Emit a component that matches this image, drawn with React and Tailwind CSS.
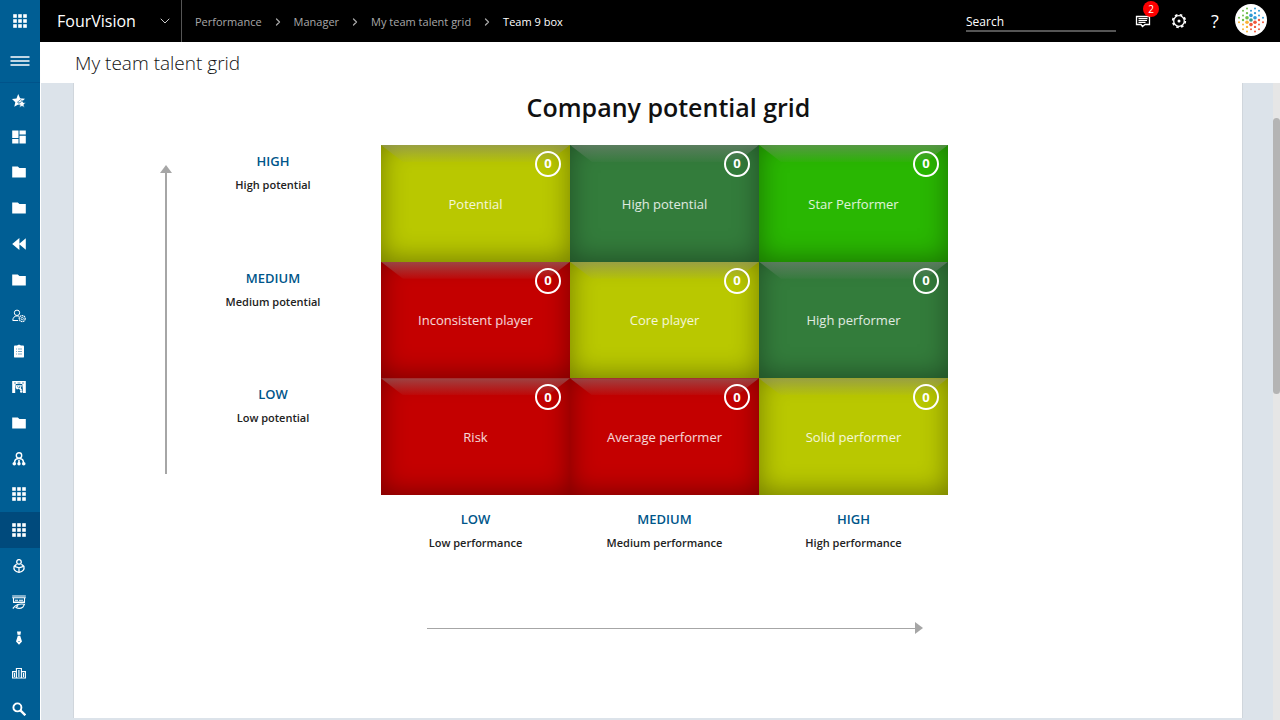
import React, { useState } from 'react';
import { ChevronDown, ChevronRight } from 'lucide-react';
import clsx from 'clsx';

const Icon = ({ children, size = 14, box = 14 }) => (
    <svg width={size} height={size} viewBox={`0 0 ${box} ${box}`} fill="currentColor" aria-hidden="true">
        {children}
    </svg>
);

const GridIcon = () => (
    <Icon>
        {[0, 5, 10].map((y) => [0, 5, 10].map((x) => <rect key={`${x}-${y}`} x={x + 0.2} y={y + 0.2} width="3.6" height="3.6" />))}
    </Icon>
);

const FolderIcon = () => (
    <Icon><path d="M.2 1.600h5.600l1.600 1.400h6.400v9.600H.2z" /></Icon>
);

const StarIcon = () => (
    <Icon>
        <path d="M6.200 0l1.900 4.300 4.900.5-3.500 3.200 1 4.400-4.300-1.800-3.900 2.200 1-4.600L0 5.100l4.500-.7z" />
        <path d="M10 6.200l1.100 2.200 2.600.4-1.900 1.800.5 2.800-2.300-1.300-2.400 1.300.5-2.800-1.900-1.800 2.600-.4z" stroke="#005e94" strokeWidth="0.600" />
        <path d="M5 8.600l4.400-3.600" stroke="#005e94" strokeWidth="0.600" />
    </Icon>
);

const DashboardIcon = () => (
    <Icon><path d="M.2.6h6.3v7.3H.2zM7.5.6h6.3v4H7.5zM.2 9h6.3v4.400H.2zM7.500 5.800h6.300v7.600H7.500z" /></Icon>
);

const RewindIcon = () => (
    <Icon><path d="M7.400 1v12L.2 7zM13.800 1.200v11.600L7 7z" /></Icon>
);

const PersonGearIcon = () => (
    <Icon>
        <g fill="none" stroke="currentColor">
            <circle cx="5" cy="3.800" r="2.700" strokeWidth="1" />
            <path d="M6.200 11.500H.8C.8 8.800 2.400 6.900 5 6.900c.8 0 1.500.2 2 .5" strokeWidth="1" />
            <circle cx="10.200" cy="9.600" r="3" strokeWidth="1.200" strokeDasharray="1.700 .5" />
            <circle cx="10.200" cy="9.600" r="1.200" strokeWidth=".8" />
        </g>
    </Icon>
);

const ClipboardIcon = () => (
    <Icon>
        <path d="M3.200 1.600h2C5.400.3 8.600.3 8.800 1.600h2c.8 0 1.200.4 1.200 1.200v9.600c0 .8-.4 1.200-1.200 1.200H3.200c-.8 0-1.200-.4-1.200-1.200V2.800c0-.8.4-1.200 1.200-1.200z" />
        <path d="M4 5h1M6 5h4M4 7.500h1M6 7.500h4M4 10h1M6 10h4" stroke="#3f86b0" strokeWidth=".7" />
    </Icon>
);

const StageIcon = () => (
    <Icon>
        <path d="M.2 1h13.600v3H.2zM.2 4h3.600l-.6 4.500v4.500H.2zM10.200 4h3.600v9H10.800V8.500z" />
        <path d="M4 5.200h6L8.800 8l1.400 2-2 .4-1.200-1.800L5 9.500 3.800 8z" />
        <path d="M2 3h2M5.500 3h3M10 3h2M5.200 6.500l1.500 1M8 6l-.6 2" stroke="#005e94" strokeWidth=".7" />
        <circle cx="9.200" cy="11.500" r="1.200" />
    </Icon>
);

const TeamIcon = () => (
    <Icon>
        <circle cx="7" cy="3.400" r="2.700" fill="none" stroke="currentColor" strokeWidth="1.400" />
        <path d="M2.600 11V9.600C3 7.400 5 6.500 7 6.500s4 .9 4.400 3.100V11" fill="none" stroke="currentColor" strokeWidth="1.500" />
        <path d="M6.200 8h1.600v3H6.200z" />
        <circle cx="2.300" cy="11.800" r="1.800" />
        <circle cx="7" cy="11.800" r="1.700" />
        <circle cx="11.700" cy="11.800" r="1.800" />
    </Icon>
);

const ReaderIcon = () => (
    <Icon>
        <g fill="none" stroke="currentColor" strokeWidth="1.300">
            <circle cx="7" cy="2.900" r="2.300" />
            <path d="M4.600 5.200L2.100 7.400c-.7 3 .5 5 4.900 5.900 4.400-.9 5.600-2.900 4.900-5.900L9.400 5.200" />
            <path d="M2.400 7.300L7 8.800l4.600-1.500M7 8.800v4.300" />
        </g>
    </Icon>
);

const BoardIcon = () => (
    <Icon>
        <g fill="none" stroke="currentColor">
            <path d="M.2 1h13.600M.2 2.700h13.600" strokeWidth="1.100" />
            <path d="M1.500 3v4h11V3M3 5.200h3M7 5.200h4M1 7.500h12" strokeWidth="1.100" />
            <path d="M.8 13.500l2.200-2.300c2-2 6-2.500 9.500-2L11 12c-2 1.500-5 1.600-7 .6l2.200-2.200" strokeWidth="1.100" />
        </g>
    </Icon>
);

const TieIcon = () => (
    <Icon>
        <path d="M5 .5h4L8.400 4H5.600zM5.900 4.500h2.200L10 10.500l-3 3.200-3-3.200z" />
        <path d="M5.500 4.200h3M6.200 10.500h1.600" stroke="#005e94" strokeWidth=".6" />
    </Icon>
);

const CityIcon = () => (
    <Icon>
        <g fill="none" stroke="currentColor" strokeWidth="1.100">
            <path d="M.6 12V5.600H4.400V12zM4.400 12V2.500h5V12M9.400 5.600h4V12H.4" />
            <path d="M6.900 4v7M2.500 7v4M11.500 7v4" strokeWidth="1.100" />
        </g>
    </Icon>
);

const SearchIcon = () => (
    <Icon>
        <circle cx="5.400" cy="5.400" r="4" fill="none" stroke="currentColor" strokeWidth="1.900" />
        <path d="M8.400 8.400l4.900 4.900" stroke="currentColor" strokeWidth="2.300" />
    </Icon>
);

const MessageIcon = () => (
    <svg width="16" height="14" viewBox="0 0 16 14" fill="none" stroke="#fff" aria-hidden="true">
        <path d="M1.500 2.500h13v8H10l-2.500 2L6 10.500H1.500z" strokeWidth="1.300" />
        <path d="M3.500 4.700h9M3.500 6.500h8.500M3.500 8.300h7" strokeWidth="1.200" />
    </svg>
);

const GearIcon = () => (
    <svg width="16" height="16" viewBox="0 0 16 16" fill="none" stroke="#fff" aria-hidden="true">
        <circle cx="8" cy="8" r="5.300" strokeWidth="1.300" />
        <circle cx="8" cy="8" r="6.300" strokeWidth="1.700" strokeDasharray="2.600 2.348" />
        <circle cx="8" cy="8" r="1.500" fill="#fff" stroke="none" />
    </svg>
);

const Avatar = () => {
    const dots = [];
    const color = (x, y) => {
        if (x === 0 && y === 0) return '#3a9a8c';
        if (x >= 0 && y < 0) return '#2f9ad6';
        if (x < 0 && y <= 0) return '#6fbf4a';
        if (x < 0) return '#f9b233';
        return '#f0583a';
    };
    for (let col = -3; col <= 3; col++) {
        for (let row = -3; row <= 3; row++) {
            const x = col * 4;
            const y = (row + (col % 2 ? 0.5 : 0)) * 4.6;
            const r = Math.hypot(x, y);
            if (r > 13) continue;
            dots.push(<circle key={`${col}-${row}`} cx={16 + x} cy={16 + y} r={r < 6 ? 1.8 : r < 9 ? 1.2 : 1} fill={color(x, y)} />);
        }
    }
    return (
        <svg width="32" height="32" viewBox="0 0 32 32" aria-hidden="true">
            <circle cx="16" cy="16" r="16" fill="#fff" />
            {dots}
        </svg>
    );
};

const navItems = [
    { label: 'Favorites', icon: StarIcon },
    { label: 'Dashboard', icon: DashboardIcon },
    { label: 'Workspaces', icon: FolderIcon },
    { label: 'Modules', icon: FolderIcon },
    { label: 'Recent', icon: RewindIcon },
    { label: 'Documents', icon: FolderIcon },
    { label: 'User settings', icon: PersonGearIcon },
    { label: 'Tasks', icon: ClipboardIcon },
    { label: 'Events', icon: StageIcon },
    { label: 'Files', icon: FolderIcon },
    { label: 'Team', icon: TeamIcon },
    { label: 'Talent grid', icon: GridIcon },
    { label: 'Team 9 box', icon: GridIcon },
    { label: 'Learning', icon: ReaderIcon },
    { label: 'Courses', icon: BoardIcon },
    { label: 'Recruitment', icon: TieIcon },
    { label: 'Organization', icon: CityIcon },
    { label: 'Find', icon: SearchIcon },
];

const crumbs = ['Performance', 'Manager', 'My team talent grid', 'Team 9 box'];

const potentialLevels = [
    { level: 'HIGH', text: 'High potential' },
    { level: 'MEDIUM', text: 'Medium potential' },
    { level: 'LOW', text: 'Low potential' },
];

const performanceLevels = [
    { level: 'LOW', text: 'Low performance' },
    { level: 'MEDIUM', text: 'Medium performance' },
    { level: 'HIGH', text: 'High performance' },
];

const boxes = [
    { name: 'Potential', count: 0, color: 'bg-[#b9c800]' },
    { name: 'High potential', count: 0, color: 'bg-[#337c3b]' },
    { name: 'Star Performer', count: 0, color: 'bg-[#29b702]' },
    { name: 'Inconsistent player', count: 0, color: 'bg-[#c40000]' },
    { name: 'Core player', count: 0, color: 'bg-[#b9c800]' },
    { name: 'High performer', count: 0, color: 'bg-[#337c3b]' },
    { name: 'Risk', count: 0, color: 'bg-[#c40000]' },
    { name: 'Average performer', count: 0, color: 'bg-[#c40000]' },
    { name: 'Solid performer', count: 0, color: 'bg-[#b9c800]' },
];

const Sidebar = () => {
    const [active, setActive] = useState('Team 9 box');

    return (
        <nav className="w-10 shrink-0 overflow-hidden bg-[#005e94] text-white">
            <button aria-label="App launcher" className="flex h-[42px] w-full items-center justify-center">
                <GridIcon />
            </button>
            <button aria-label="Expand menu" className="flex h-[41px] w-full items-center justify-center border-b border-[#00538a] pb-0.5">
                <svg width="20" height="10" viewBox="0 0 20 10" aria-hidden="true">
                    <path d="M.5 1h19M.5 5h19M.5 9h19" stroke="#fff" strokeWidth="1.400" />
                </svg>
            </button>
            <ul className="grid h-[644px] auto-rows-fr">
                {navItems.map(({ label, icon: ItemIcon }) => (
                    <li key={label} className="flex">
                        <button
                            aria-label={label}
                            onClick={() => setActive(label)}
                            className={clsx('flex w-full items-center justify-center pr-0.5', active === label && 'bg-[#004a7c]')}
                        >
                            <ItemIcon />
                        </button>
                    </li>
                ))}
            </ul>
        </nav>
    );
};

const TopBar = () => (
    <header className="flex h-[42px] shrink-0 items-center bg-black text-white">
        <button className="flex h-full w-[142px] items-center justify-between border-r border-[#555] pr-2 pl-[17px] text-base">
            FourVision
            <ChevronDown size={16} strokeWidth={1.5} className="text-[#ccc]" />
        </button>
        <ol className="ml-[13px] flex items-center gap-2.5 pt-0.5 text-[11px] text-[#a8a8a8]">
            {crumbs.map((crumb, i) => (
                <li key={crumb} className="flex items-center gap-2.5">
                    {i > 0 && <ChevronRight size={12} strokeWidth={2.5} />}
                    <a href="#" className={clsx(i === crumbs.length - 1 && 'text-white')}>{crumb}</a>
                </li>
            ))}
        </ol>
        <input
            type="text"
            aria-label="Search"
            placeholder="Search"
            className="ml-auto h-[22px] w-[150px] border-b-2 border-[#555] bg-transparent pt-0.5 text-xs text-white outline-none placeholder:text-white"
        />
        <button aria-label="Messages" className="relative ml-[19px] flex h-8 w-4 items-center justify-center">
            <MessageIcon />
            <span className="absolute -top-1 left-2 flex size-4 items-center justify-center rounded-full bg-[#fe0000] text-[10px]">2</span>
        </button>
        <button aria-label="Settings" className="ml-5"><GearIcon /></button>
        <button aria-label="Help" className="ml-5 w-4 text-lg leading-6">?</button>
        <button aria-label="Account" className="mr-[13px] ml-3 pb-0.5"><Avatar /></button>
    </header>
);

const AxisLabel = ({ level, text }) => (
    <div className="text-center">
        <p className="text-[13px] leading-8 font-semibold text-[#00568a]">{level}</p>
        <p className="text-[11px] leading-4 font-semibold text-[#222]">{text}</p>
    </div>
);

const Box = ({ name, count, color }) => (
    <button className={clsx('relative pt-0.5 text-[13px] text-white/85 shadow-[inset_0_-3px_26px_rgba(0,0,0,0.38)]', color)}>
        <span className="absolute inset-x-0 top-0 h-[17px] bg-linear-to-b from-[#959595]/45 to-[#959595]/5 [clip-path:polygon(0_0,100%_0,calc(100%-22px)_100%,22px_100%)]"></span>
        {name}
        <span className="absolute top-1.5 right-[9px] flex size-[26px] items-center justify-center rounded-full border-2 border-white font-bold text-white">{count}</span>
    </button>
);

const TalentGrid = () => (
    <section className="h-full border-x border-[#d0d6dc] bg-white pt-2">
        <h2 className="pl-[21px] text-center text-[25px] leading-8 font-semibold text-[#111]">Company potential grid</h2>
        <div className="mt-[22px] grid grid-cols-[14px_200px_1fr] pr-[294px] pl-[85px]">
            <div className="mt-5 flex h-[309px] flex-col items-center">
                <div className="border-x-[6px] border-b-8 border-x-transparent border-b-[#a6a6a6]"></div>
                <div className="w-0.5 flex-1 bg-[#a6a6a6]"></div>
            </div>
            <div className="grid h-[350px] grid-rows-3">
                {potentialLevels.map((p) => <AxisLabel key={p.level} {...p} />)}
            </div>
            <div className="ml-2">
                <div className="grid h-[350px] grid-cols-3 grid-rows-3">
                    {boxes.map((box) => <Box key={box.name} {...box} />)}
                </div>
                <div className="mt-2 grid grid-cols-3">
                    {performanceLevels.map((p) => <AxisLabel key={p.level} {...p} />)}
                </div>
                <div className="mt-[71px] mr-[25px] ml-[46px] flex items-center">
                    <div className="h-px flex-1 bg-[#a6a6a6]"></div>
                    <div className="border-y-[6px] border-l-8 border-y-transparent border-l-[#a6a6a6]"></div>
                </div>
            </div>
        </div>
    </section>
);

const App = () => (
    <div className="flex h-screen overflow-hidden bg-white font-['Open_Sans','Noto_Sans',sans-serif]">
        <Sidebar />
        <div className="flex min-w-0 flex-1 flex-col">
            <TopBar />
            <h1 className="h-[41px] shrink-0 pl-[35px] text-[19px] leading-[43px] font-light text-[#111]">My team talent grid</h1>
            <div className="flex min-h-0 flex-1 bg-[#dce3ea]">
                <main className="min-w-0 flex-1 border-l border-white pr-[30px] pb-0.5 pl-8">
                    <TalentGrid />
                </main>
                <div className="w-[7px] bg-[#e6e6e6] pt-[35px]">
                    <div className="h-[276px] rounded-full bg-[#b4b4b4]"></div>
                </div>
            </div>
        </div>
    </div>
);

export default App;
